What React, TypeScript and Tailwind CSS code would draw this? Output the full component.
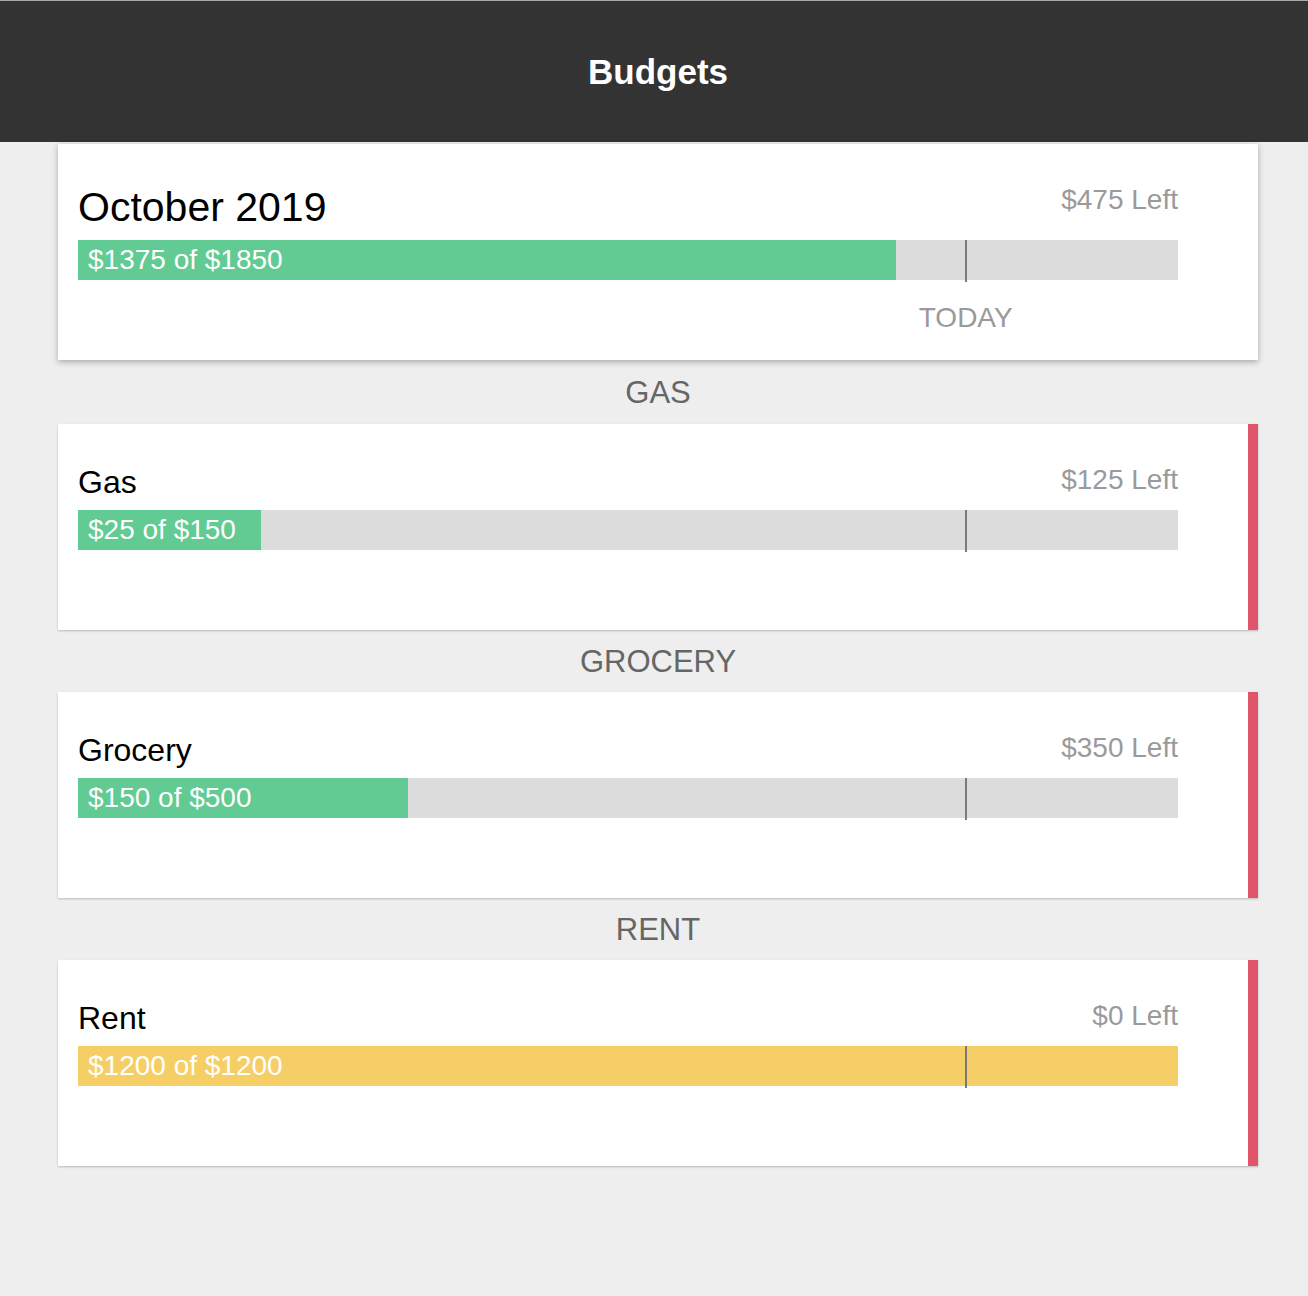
const font = { fontFamily: '"Liberation Sans", Arial, Helvetica, sans-serif' };

type Budget = {
  key: string;
  title: string;
  spent: number;
  total: number;
  color: string;
  showToday?: boolean;
  big?: boolean;
};

const TODAY_PCT = 80.7;

const BudgetBar = ({ spent, total, color, showToday }: Pick<Budget, 'spent' | 'total' | 'color' | 'showToday'>) => {
  const pct = Math.min(100, (spent / total) * 100);
  return (
    <div className="relative mt-[10px] h-[40px] bg-[#dcdcdc]">
      <div className={`absolute inset-y-0 left-0 ${color}`} style={{ width: `${pct}%` }} />
      <span className="relative flex h-full items-center pl-[10px] text-[28px] leading-none text-white">
        ${spent} of ${total}
      </span>
      {/* today marker */}
      <div
        className="absolute top-0 h-[42px] w-[2px] bg-[#7a7a7a]"
        style={{ left: `calc(${TODAY_PCT}% - 1px)` }}
      />
      {showToday && (
        <span
          className="absolute top-[62px] -translate-x-1/2 text-[28px] leading-[1.15] text-[#9a9a9a]"
          style={{ left: `${TODAY_PCT}%` }}
        >
          TODAY
        </span>
      )}
    </div>
  );
};

const BudgetCard = ({ budget, flagged }: { budget: Budget; flagged?: boolean }) => {
  const left = budget.total - budget.spent;
  return (
    <div
      className={`flex bg-white ${
        budget.big ? 'shadow-[0_2px_6px_rgba(0,0,0,0.3)]' : 'shadow-[0_1px_2px_rgba(0,0,0,0.22)]'
      }`}
    >
      <div className="flex-1 pb-[80px] pl-[20px] pr-[70px] pt-[40px]">
        <div className="flex items-start justify-between">
          <span
            className={`${budget.big ? 'text-[41px] leading-[46px]' : 'text-[32px] leading-[36px]'} text-black`}
          >
            {budget.title}
          </span>
          <span className="text-[28px] leading-[32px] text-[#9a9a9a]">${left} Left</span>
        </div>
        <BudgetBar spent={budget.spent} total={budget.total} color={budget.color} showToday={budget.showToday} />
      </div>
      <div className={`w-[10px] ${flagged ? 'bg-[#e05569]' : 'bg-white'}`} />
    </div>
  );
};

const categories: Budget[] = [
  { key: 'GAS', title: 'Gas', spent: 25, total: 150, color: 'bg-[#62ca93]' },
  { key: 'GROCERY', title: 'Grocery', spent: 150, total: 500, color: 'bg-[#62ca93]' },
  { key: 'RENT', title: 'Rent', spent: 1200, total: 1200, color: 'bg-[#f5cf65]' },
];

export default function App() {
  return (
    <div className="min-h-[1296px] bg-[#eeeeee]" style={font}>
      <div className="h-[1px] bg-[#a8a8a8]" />
      <header className="flex h-[141px] items-center justify-center bg-[#333333] pl-[8px]">
        <h1 className="text-[35px] font-bold leading-none text-white">Budgets</h1>
      </header>

      <main className="ml-[58px] w-[1200px] pt-[2px]">
        <BudgetCard
          budget={{
            key: 'MONTH',
            title: 'October 2019',
            spent: 1375,
            total: 1850,
            color: 'bg-[#62ca93]',
            showToday: true,
            big: true,
          }}
        />

        {categories.map((c, i) => (
          <section key={c.key}>
            <div
              className={`flex ${i === 0 ? 'h-[64px]' : 'h-[62px]'} items-center justify-center text-[31px] leading-none text-[#666666]`}
            >
              {c.key}
            </div>
            <BudgetCard budget={c} flagged />
          </section>
        ))}
      </main>
    </div>
  );
}
